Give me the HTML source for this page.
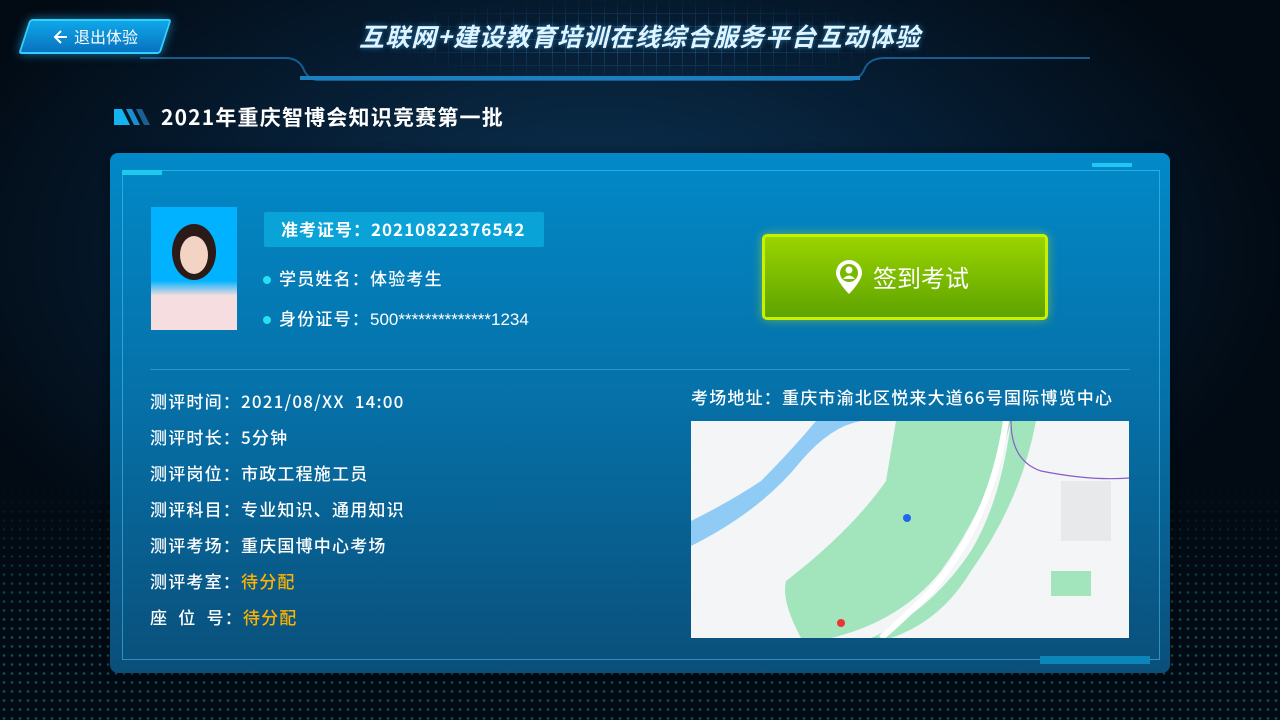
<!DOCTYPE html>
<html><head><meta charset="utf-8"><style>
*{margin:0;padding:0;box-sizing:border-box}
body{width:1280px;height:720px;overflow:hidden;position:relative;font-family:"Noto Sans CJK SC","Liberation Sans",sans-serif;color:#fff;
background:radial-gradient(ellipse 700px 400px at 600px 250px,#0c3556 0%,#061d33 55%,#020a13 100%)}
.dots{position:absolute;left:0;top:480px;width:1280px;height:240px;
background-image:radial-gradient(circle,rgba(40,170,190,.55) 1px,transparent 1.6px);background-size:8px 9px;
-webkit-mask-image:linear-gradient(to bottom,transparent 0,#000 60%);opacity:.8}
.grid{position:absolute;left:370px;top:0;width:540px;height:80px;
background-image:linear-gradient(rgba(60,140,200,.25) 1px,transparent 1px),linear-gradient(90deg,rgba(60,140,200,.25) 1px,transparent 1px);background-size:13px 13px;
-webkit-mask-image:radial-gradient(ellipse at center,#000 30%,transparent 75%)}
.title{position:absolute;left:0;width:1280px;top:18px;text-align:center;font-size:25px;font-weight:bold;font-style:italic;letter-spacing:1px;
color:#dff4ff;text-shadow:0 0 6px rgba(60,180,255,.6)}
.back{position:absolute;left:24px;top:19px;width:142px;height:35px;transform:skewX(-18deg);
background:linear-gradient(#0fa7e8,#0872c0);border:2px solid #31d0ff;box-shadow:0 0 10px rgba(40,190,255,.6);border-radius:3px}
.backt{position:absolute;top:25px;font-size:16px;line-height:22px}
.sub{position:absolute;left:161px;top:103px;font-size:21px;font-weight:bold;line-height:28px;letter-spacing:1.2px}
.card{position:absolute;left:110px;top:153px;width:1060px;height:520px;border-radius:8px;
background:linear-gradient(#0289c8 0%,#066fa6 50%,#0a4f7a 100%);box-shadow:0 0 10px rgba(0,0,0,.4)}
.frame{position:absolute;left:122px;top:170px;width:1038px;height:490px;border:1px solid rgba(80,210,255,.5)}
.l{position:absolute;font-size:17px;white-space:nowrap;line-height:24px;letter-spacing:1.2px;font-weight:500}
.y{color:#ffb300}
.dot{display:inline-block;width:8px;height:8px;border-radius:50%;background:#26e0f0;margin-right:8px;vertical-align:middle}
</style></head><body>
<div class="dots"></div>
<div class="grid"></div>
<svg style="position:absolute;left:0;top:0" width="1280" height="90">
<path d="M140 58 H285 Q298 58 303 68 Q308 80 318 80 H850 Q860 80 865 68 Q870 58 885 58 H1090" fill="none" stroke="#1a6ea8" stroke-width="2" opacity=".8"/>
<path d="M300 78 H860" stroke="#1b7fc0" stroke-width="4"/>
</svg>
<div class="title">互联网+建设教育培训在线综合服务平台互动体验</div>
<div class="back"></div>
<svg style="position:absolute;left:52px;top:28px" width="18" height="18"><path d="M15 9H3M9 3L3 9L9 15" fill="none" stroke="#fff" stroke-width="2"/></svg>
<div class="backt" style="left:74px">退出体验</div>
<svg style="position:absolute;left:114px;top:109px" width="40" height="16"><path d="M0 0H8L16 16H0Z" fill="#14b4f0"/><path d="M12 0H18L26 16H20Z" fill="#1c8fd0"/><path d="M22 0H28L36 16H30Z" fill="#1a5f90"/></svg>
<div class="sub">2021年重庆智博会知识竞赛第一批</div>
<div class="card"></div>
<div class="frame"></div>
<div style="position:absolute;left:122px;top:170px;width:40px;height:5px;background:#1ec8f0"></div>
<div style="position:absolute;left:1092px;top:163px;width:40px;height:4px;background:#1ec8f0"></div>
<div style="position:absolute;left:1040px;top:656px;width:110px;height:8px;background:#0a86b8"></div>
<div style="position:absolute;left:151px;top:207px;width:86px;height:123px;background:linear-gradient(#00b2ff 0,#00b2ff 60%,#f5dde0 72%)">
<svg width="86" height="123"><ellipse cx="43" cy="45" rx="22" ry="28" fill="#2a1a18"/><ellipse cx="43" cy="48" rx="14" ry="19" fill="#f3d4c4"/><path d="M0 123V105Q10 92 43 88Q76 92 86 105V123Z" fill="#f6dde0"/></svg></div>
<div style="position:absolute;left:264px;top:212px;width:280px;height:35px;background:#0aa3d8;border-radius:2px"></div>
<div class="l" style="left:281px;top:217px;font-weight:bold;letter-spacing:1px">准考证号：20210822376542</div>
<div class="l" style="left:263px;top:266px"><span class="dot"></span>学员姓名：体验考生</div>
<div class="l" style="left:263px;top:306px"><span class="dot"></span>身份证号：<span style="font-family:'Liberation Sans',sans-serif;letter-spacing:0">500**************1234</span></div>
<div style="position:absolute;left:762px;top:234px;width:286px;height:86px;border-radius:5px;background:linear-gradient(#9ad400,#5ea300);border:3px solid #c8f000;box-shadow:0 0 10px rgba(200,240,0,.5)"></div>
<svg style="position:absolute;left:834px;top:259px" width="30" height="36"><path d="M15 1A13 13 0 0 0 2 14C2 22 15 35 15 35S28 22 28 14A13 13 0 0 0 15 1Z" fill="#fff"/><circle cx="15" cy="14" r="9" fill="#78b800"/><circle cx="15" cy="11" r="3.5" fill="#fff"/><path d="M9 20Q15 13 21 20" fill="#fff"/></svg>
<div class="l" style="left:873px;top:260px;font-size:24px;line-height:34px;letter-spacing:0;font-weight:400">签到考试</div>
<div style="position:absolute;left:150px;top:369px;width:980px;height:1px;background:rgba(80,190,240,.5)"></div>
<div class="l" style="left:150px;top:389px">测评时间：2021/08/XX&nbsp; 14:00</div>
<div class="l" style="left:150px;top:425px">测评时长：5分钟</div>
<div class="l" style="left:150px;top:461px">测评岗位：市政工程施工员</div>
<div class="l" style="left:150px;top:497px">测评科目：专业知识、通用知识</div>
<div class="l" style="left:150px;top:533px">测评考场：重庆国博中心考场</div>
<div class="l" style="left:150px;top:569px">测评考室：<span class="y">待分配</span></div>
<div class="l" style="left:150px;top:605px">座&nbsp; 位&nbsp; 号：<span class="y">待分配</span></div>
<div class="l" style="left:691px;top:385px">考场地址：重庆市渝北区悦来大道66号国际博览中心</div>
<svg style="position:absolute;left:691px;top:421px" width="438" height="217" viewBox="0 0 438 217">
<rect width="438" height="217" fill="#f4f5f6"/>
<path d="M0 125Q70 90 110 40Q140 5 170 0H125Q100 30 70 60Q40 80 0 100Z" fill="#8fcbf5"/>
<path d="M205 0H320Q300 80 250 150Q210 200 140 217H110Q90 180 95 160Q160 110 195 60Z" fill="#a2e5bd"/>
<path d="M320 0H345Q330 80 280 150Q250 200 200 217H180Q240 190 280 130Q310 80 320 0Z" fill="#a2e5bd"/>
<path d="M315 0Q300 100 240 170Q210 200 190 217" fill="none" stroke="#fff" stroke-width="6"/>
<path d="M320 0Q320 40 350 50Q400 60 438 57" fill="none" stroke="#8a5cc8" stroke-width="1.2"/>
<rect x="360" y="150" width="40" height="25" fill="#a2e5bd"/>
<rect x="370" y="60" width="50" height="60" fill="#e8e9ea"/>
<circle cx="216" cy="97" r="4" fill="#2266ee"/><circle cx="150" cy="202" r="4" fill="#ee3333"/>
</svg>
</body></html>
